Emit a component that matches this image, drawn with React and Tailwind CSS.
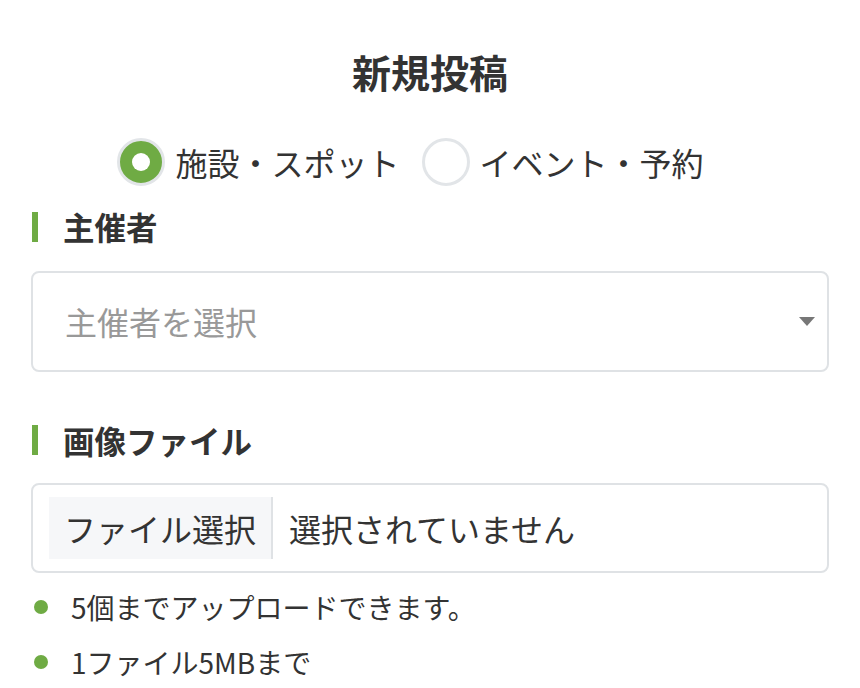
import React, { useState } from "react";

const font = { fontFamily: '"Noto Sans CJK JP", "Noto Sans", sans-serif' };

function Radio({ checked, label, onClick }) {
  return (
    <label className="flex items-center gap-[10px] cursor-pointer" onClick={onClick}>
      <span
        className={
          checked
            ? "flex h-[48px] w-[48px] items-center justify-center rounded-full border-[3px] border-[#e2e5e8] bg-[#6fab44]"
            : "h-[48px] w-[48px] rounded-full border-[3px] border-[#e2e5e8] bg-white"
        }
      >
        {checked && <span className="h-[18px] w-[18px] rounded-full bg-white" />}
      </span>
      <span className="text-[32px] leading-none text-[#333]">{label}</span>
    </label>
  );
}

function SectionTitle({ children }) {
  return (
    <div className="flex items-center gap-[25px] pl-[1px]">
      <span className="h-[30px] w-[6px] bg-[#6fab44]" />
      <h2 className="text-[31.5px] font-bold leading-none text-[#333]">{children}</h2>
    </div>
  );
}

export default function App() {
  const [type, setType] = useState("spot");

  return (
    <div className="min-h-screen bg-white px-[31px] text-[#333]" style={font}>
      <h1 className="pt-[52px] text-center text-[39px] font-bold leading-none">新規投稿</h1>

      {/* 投稿タイプ */}
      <div className="mt-[47px] flex items-center justify-center gap-[22px] pr-[39px]">
        <Radio checked={type === "spot"} label="施設・スポット" onClick={() => setType("spot")} />
        <Radio checked={type === "event"} label="イベント・予約" onClick={() => setType("event")} />
      </div>

      <div className="mt-[25px]">
        <SectionTitle>主催者</SectionTitle>
        <div className="mt-[28px] flex h-[101px] items-center justify-between rounded-[8px] border-2 border-[#dfe2e5] pl-[32px] pr-[12px]">
          <span className="text-[32px] leading-none text-[#999]">主催者を選択</span>
          <svg width="16" height="9" viewBox="0 0 16 9">
            <path d="M0 0h16L8 9z" fill="#777" />
          </svg>
        </div>
      </div>

      <div className="mt-[53px]">
        <SectionTitle>画像ファイル</SectionTitle>
        <div className="mt-[27px] flex h-[90px] items-center rounded-[8px] border-2 border-[#dfe2e5] px-[16px]">
          <span className="flex h-[62px] items-center border-r-2 border-[#dfe2e5] bg-[#f6f7f9] px-[15px] text-[32px] leading-none">
            ファイル選択
          </span>
          <span className="pl-[16px] text-[32px] leading-none">選択されていません</span>
        </div>
      </div>

      <ul className="mt-[20px] flex flex-col gap-[27px] pl-[3px] text-[28px] leading-none">
        <li className="flex items-center gap-[23px]">
          <span className="h-[14px] w-[14px] rounded-full bg-[#6fab44]" />
          5個までアップロードできます。
        </li>
        <li className="flex items-center gap-[23px]">
          <span className="h-[14px] w-[14px] rounded-full bg-[#6fab44]" />
          1ファイル5MBまで
        </li>
      </ul>
    </div>
  );
}
